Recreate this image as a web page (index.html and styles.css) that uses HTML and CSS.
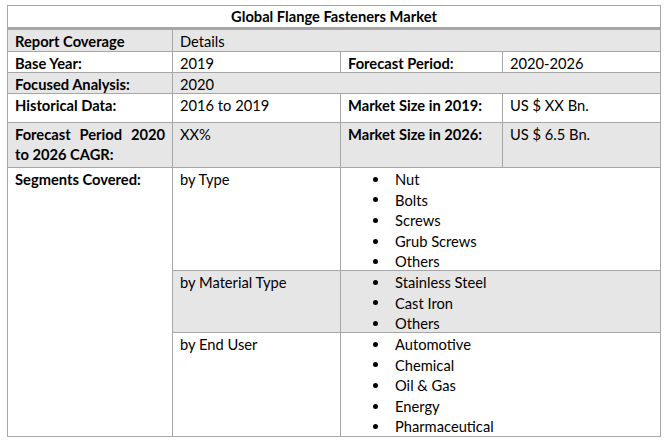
FILE: index.html
```html
<!DOCTYPE html>
<html>
<head>
<meta charset="utf-8">
<link rel="stylesheet" href="styles.css">
</head>
<body>
<div class="sheet">
  <div class="cell title">Global Flange Fasteners Market</div>

  <div class="cell shade b">Report Coverage</div>
  <div class="cell shade span3">Details</div>

  <div class="cell b">Base Year:</div>
  <div class="cell">2019</div>
  <div class="cell b">Forecast Period:</div>
  <div class="cell">2020-2026</div>

  <div class="cell shade b">Focused Analysis:</div>
  <div class="cell shade span3">2020</div>

  <div class="cell b">Historical Data:</div>
  <div class="cell">2016 to 2019</div>
  <div class="cell b">Market Size in 2019:</div>
  <div class="cell">US $ XX Bn.</div>

  <div class="cell shade b justify">Forecast Period 2020 to 2026 CAGR:</div>
  <div class="cell shade">XX%</div>
  <div class="cell shade b">Market Size in 2026:</div>
  <div class="cell shade">US $ 6.5 Bn.</div>

  <div class="cell b seg">Segments Covered:</div>
  <div class="cell sub">by Type</div>
  <div class="cell span2 list-cell">
    <ul class="list">
      <li>Nut</li>
      <li>Bolts</li>
      <li>Screws</li>
      <li>Grub Screws</li>
      <li>Others</li>
    </ul>
  </div>

  <div class="cell shade sub">by Material Type</div>
  <div class="cell shade span2 list-cell">
    <ul class="list">
      <li>Stainless Steel</li>
      <li>Cast Iron</li>
      <li>Others</li>
    </ul>
  </div>

  <div class="cell sub">by End User</div>
  <div class="cell span2 list-cell">
    <ul class="list">
      <li>Automotive</li>
      <li>Chemical</li>
      <li>Oil &amp; Gas</li>
      <li>Energy</li>
      <li>Pharmaceutical</li>
    </ul>
  </div>
</div>
</body>
</html>
```

FILE: styles.css
```css
html, body {
  margin: 0;
  padding: 0;
  background: #ffffff;
}

body {
  padding: 5px 0 0 7px;
  font-family: Lato, "Liberation Sans", sans-serif;
  font-size: 14.7px;
  color: #000000;
}

.sheet {
  width: 654px;
  box-sizing: border-box;
  display: grid;
  grid-template-columns: 164px 167px 161px 157px;
  grid-template-rows: 23px 21px 20px 20px 28px 44px 102px 61px 103px;
  gap: 1px;
  padding: 1px;
  background: #a6a6a6;
}

.cell {
  background: #ffffff;
  padding: 1px 7px 0;
  line-height: 20px;
  white-space: nowrap;
  overflow: hidden;
}

.shade {
  background: #e7e6e6;
}

.b {
  font-weight: 700;
}

.title {
  grid-column: 1 / 5;
  text-align: center;
  font-weight: 700;
  border-bottom: 2px solid #a6a6a6;
  line-height: 21px;
  padding-top: 0;
}

.span3 {
  grid-column: 2 / 5;
}

.span2 {
  grid-column: 3 / 5;
}

.justify {
  white-space: normal;
  text-align: justify;
  line-height: 20px;
  padding-top: 1px;
}

.seg {
  grid-row: 7 / 10;
}

.sub {
  grid-column: 2;
}

.list-cell {
  padding: 1px 0 0;
}

.list {
  list-style: none;
  margin: 0;
  padding: 0 0 0 32px;
}

.list li {
  display: flex;
  align-items: center;
  height: 20.6px;
  line-height: 20.6px;
}

.list li::before {
  content: "";
  width: 5px;
  height: 5px;
  border-radius: 50%;
  background: #000000;
  margin-right: 17px;
  flex: none;
}
```
